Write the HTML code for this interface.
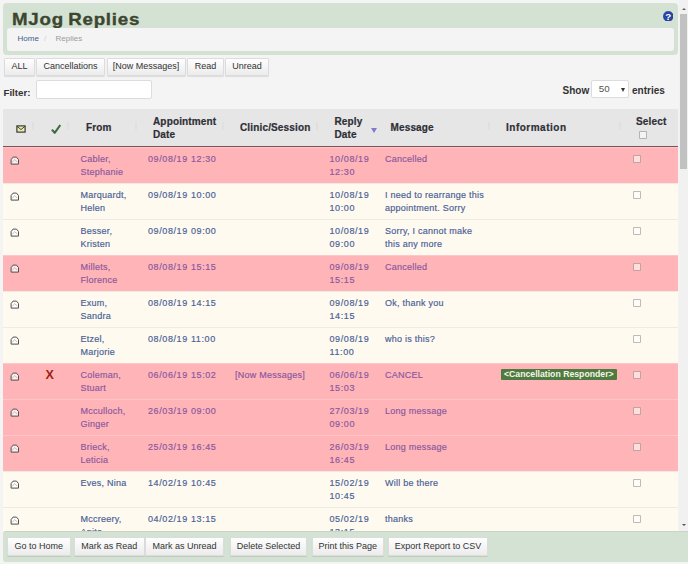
<!DOCTYPE html>
<html><head><meta charset="utf-8"><style>
*{box-sizing:border-box}
html,body{margin:0;padding:0}
body{width:688px;height:564px;overflow:hidden;background:#f4f4f4;position:relative;font-family:"Liberation Sans",sans-serif;}
.abs{position:absolute}
#hdr{position:absolute;left:3px;top:3px;width:675px;height:52px;background:#d4e2d4;border-radius:4px;}
#title{position:absolute;left:12px;top:7.5px;font-size:17px;font-weight:bold;color:#3c4630;letter-spacing:0.7px;word-spacing:-1.5px;-webkit-text-stroke:0.35px currentColor;transform:scaleX(1.1);transform-origin:0 0;white-space:nowrap;line-height:24px}
#help{position:absolute;left:662px;top:10px;width:11.5px;height:11.5px;border-radius:50%;background:#2f4fae;color:#fff;font-size:9px;font-weight:bold;text-align:center;line-height:11.5px}
#bc{position:absolute;left:7px;top:28px;width:667px;height:22.5px;background:#f3f4f3;border-radius:3px;}
#bc span{position:absolute;top:0;font-size:8px;line-height:10px;white-space:nowrap}
.btn{position:absolute;height:17.5px;border:1px solid #dcdcdc;border-radius:1px;background:linear-gradient(#fefefe,#ececec);box-shadow:0 1px 1px rgba(0,0,0,.10);font-size:9px;color:#333;text-align:center;line-height:15.5px;white-space:nowrap}
.lbl{position:absolute;font-size:10px;font-weight:bold;color:#333;white-space:nowrap;line-height:12px}
#filter{position:absolute;left:36px;top:79.7px;width:116px;height:19.2px;background:#fff;border:1px solid #dcdcdc;border-radius:2px}
#sel{position:absolute;left:591.3px;top:80.2px;width:38px;height:18px;background:#fff;border:1px solid #dcdcdc;border-radius:2px;font-size:9.8px;color:#555;line-height:16.5px;padding-left:6.5px}
#sel i{position:absolute;right:3px;top:7px;width:0;height:0;border-left:2.5px solid transparent;border-right:2.5px solid transparent;border-top:4px solid #333}
#thead{position:absolute;left:3px;top:108.5px;width:675px;height:37px;background:#e6e6e6}
#thb{position:absolute;left:3px;top:145.5px;width:675px;height:1.6px;background:#7a5257}
.th{position:absolute;font-size:10px;font-weight:bold;color:#2f2f36;letter-spacing:0.15px;line-height:12.5px;-webkit-text-stroke:0.2px currentColor;white-space:nowrap}
.sort{position:absolute;width:2px;height:8px;background:#e0e0e0;top:14px}
.row{position:absolute;left:3px;width:675px;height:36px;}
.rp{background:#ffb5b7;color:#8c58a0;border-top:1px solid #ffc5c8}
.rc{background:#fffaf0;color:#4a6296;border-top:1px solid #efeae2}
.row .t{position:absolute;top:4.5px;font-size:9px;line-height:13px;-webkit-text-stroke:0.18px currentColor;letter-spacing:0.25px;white-space:nowrap}
.row .dt{letter-spacing:0.6px}
.ic{position:absolute}
.eo{display:block}
.xx{position:absolute;left:42.5px;top:3.5px;font-size:12.5px;font-weight:bold;color:#a01e14;line-height:14px}
.badge{position:absolute;left:498px;top:4.5px;height:11px;padding:0 3px;background:#4e7b3f;color:#f6f6ea;font-size:8.7px;font-weight:bold;line-height:11px;border-radius:1px;white-space:nowrap}
.cb{position:absolute;width:7.5px;height:7.5px;border:1px solid rgba(60,40,40,0.32);border-radius:1px;background:rgba(255,255,255,0.55)}
#sb{position:absolute;left:679px;top:0;width:9px;height:531px;background:#f1f1f1}
#thumb{position:absolute;left:680px;top:14px;width:7px;height:155px;background:#c1c1c1}
.arr{position:absolute;width:0;height:0;border-left:3px solid transparent;border-right:3px solid transparent}
#foot{position:absolute;left:3px;top:531px;width:685px;height:31px;background:#d4e2d4;border-top:1px solid #c9d3c6;border-radius:3px 0 0 3px}
</style></head><body>
<div id="hdr"></div>
<div id="title" class="abs">MJog Replies</div>
<svg class="abs" style="left:662.7px;top:10.9px" width="10.6" height="10.6" viewBox="0 0 10.6 10.6"><circle cx="5.3" cy="5.3" r="5.1" fill="#2a44a6" stroke="#22378a" stroke-width="0.4"/><text x="5.3" y="8.9" text-anchor="middle" font-family="Liberation Sans" font-weight="bold" font-size="9.8" fill="#fff">?</text></svg>
<div id="bc"><span style="left:10.5px;top:6px;color:#3f5c90">Home</span><span style="left:37px;top:6px;color:#cfcfcf">/</span><span style="left:48.5px;top:6px;color:#9b9b9b">Replies</span></div>

<div class="btn" style="left:4px;top:58.2px;width:31px">ALL</div>
<div class="btn" style="left:36px;top:58.2px;width:69px">Cancellations</div>
<div class="btn" style="left:106.5px;top:58.2px;width:79px">[Now Messages]</div>
<div class="btn" style="left:187px;top:58.2px;width:37px">Read</div>
<div class="btn" style="left:225px;top:58.2px;width:44px">Unread</div>

<div class="lbl" style="left:3.5px;top:87px;font-size:9.7px">Filter:</div>
<div id="filter"></div>
<div class="lbl" style="left:562.5px;top:85px">Show</div>
<div id="sel">50<i></i></div>
<div class="lbl" style="left:632px;top:85px">entries</div>

<div id="thead"></div>
<div id="thb"></div>
<svg class="abs" style="left:15.5px;top:124.5px" width="10" height="8" viewBox="0 0 10 8"><rect x="0.9" y="0.9" width="8.2" height="6.2" fill="#ecebb0" stroke="#2a2a2a" stroke-width="1.1"/><path d="M1 1.2L5 4.6L9 1.2" fill="none" stroke="#3a4a2a" stroke-width="1"/></svg>
<svg class="abs" style="left:50.5px;top:123.5px" width="10" height="10" viewBox="0 0 10 10"><path d="M0.9 5.6L3.7 8.8L9.3 1" fill="none" stroke="#3f6a3c" stroke-width="2.1" stroke-linejoin="round"/></svg>
<div class="th" style="left:86px;top:122px">From</div>
<div class="th" style="left:153px;top:116px">Appointment<br>Date</div>
<div class="th" style="left:240px;top:122px">Clinic/Session</div>
<div class="th" style="left:334.5px;top:116px">Reply<br>Date</div>
<svg class="abs" style="left:370.5px;top:128px" width="6" height="5" viewBox="0 0 6 5"><path d="M0 0H6L3 5Z" fill="#7b7bd0"/></svg>
<div class="th" style="left:390.5px;top:122px">Message</div>
<div class="th" style="left:506px;top:122px;letter-spacing:0.5px">Information</div>
<div class="th" style="left:636px;top:116px">Select</div>
<div class="cb" style="left:639px;top:131px"></div>
<div class="sort" style="left:32px;top:122px"></div>
<div class="sort" style="left:67px;top:122px"></div>
<div class="sort" style="left:135px;top:122px"></div>
<div class="sort" style="left:222px;top:122px"></div>
<div class="sort" style="left:316px;top:122px"></div>
<div class="sort" style="left:488px;top:122px"></div>
<div class="sort" style="left:619px;top:122px"></div>

<div class="row rp" style="top:147px"><div class="ic" style="left:7px;top:8px"><svg class="eo" width="10" height="9" viewBox="0 0 10 9"><path d="M1.1 8.1V3.6L3.1 1.1H6.5L8.5 3.6V8.1Z" fill="rgba(255,255,255,0.75)" stroke="#505050" stroke-width="1" stroke-linejoin="round"/><path d="M2.2 6.2L4.8 3.6L7.4 6.2" fill="none" stroke="#b8b8b8" stroke-width="0.9"/></svg></div><div class="t nm" style="left:77.5px">Cabler,<br>Stephanie</div><div class="t dt" style="left:145px">09/08/19 12:30</div><div class="t dt" style="left:326.5px">10/08/19<br>12:30</div><div class="t" style="left:382px">Cancelled</div><div class="cb" style="left:630.3px;top:7.3px"></div></div><div class="row rc" style="top:183px"><div class="ic" style="left:7px;top:8px"><svg class="eo" width="10" height="9" viewBox="0 0 10 9"><path d="M1.1 8.1V3.6L3.1 1.1H6.5L8.5 3.6V8.1Z" fill="rgba(255,255,255,0.75)" stroke="#505050" stroke-width="1" stroke-linejoin="round"/><path d="M2.2 6.2L4.8 3.6L7.4 6.2" fill="none" stroke="#b8b8b8" stroke-width="0.9"/></svg></div><div class="t nm" style="left:77.5px">Marquardt,<br>Helen</div><div class="t dt" style="left:145px">09/08/19 10:00</div><div class="t dt" style="left:326.5px">10/08/19<br>10:00</div><div class="t" style="left:382px">I need to rearrange this<br>appointment. Sorry</div><div class="cb" style="left:630.3px;top:7.3px"></div></div><div class="row rc" style="top:219px"><div class="ic" style="left:7px;top:8px"><svg class="eo" width="10" height="9" viewBox="0 0 10 9"><path d="M1.1 8.1V3.6L3.1 1.1H6.5L8.5 3.6V8.1Z" fill="rgba(255,255,255,0.75)" stroke="#505050" stroke-width="1" stroke-linejoin="round"/><path d="M2.2 6.2L4.8 3.6L7.4 6.2" fill="none" stroke="#b8b8b8" stroke-width="0.9"/></svg></div><div class="t nm" style="left:77.5px">Besser,<br>Kristen</div><div class="t dt" style="left:145px">09/08/19 09:00</div><div class="t dt" style="left:326.5px">10/08/19<br>09:00</div><div class="t" style="left:382px">Sorry, I cannot make<br>this any more</div><div class="cb" style="left:630.3px;top:7.3px"></div></div><div class="row rp" style="top:255px"><div class="ic" style="left:7px;top:8px"><svg class="eo" width="10" height="9" viewBox="0 0 10 9"><path d="M1.1 8.1V3.6L3.1 1.1H6.5L8.5 3.6V8.1Z" fill="rgba(255,255,255,0.75)" stroke="#505050" stroke-width="1" stroke-linejoin="round"/><path d="M2.2 6.2L4.8 3.6L7.4 6.2" fill="none" stroke="#b8b8b8" stroke-width="0.9"/></svg></div><div class="t nm" style="left:77.5px">Millets,<br>Florence</div><div class="t dt" style="left:145px">08/08/19 15:15</div><div class="t dt" style="left:326.5px">09/08/19<br>15:15</div><div class="t" style="left:382px">Cancelled</div><div class="cb" style="left:630.3px;top:7.3px"></div></div><div class="row rc" style="top:291px"><div class="ic" style="left:7px;top:8px"><svg class="eo" width="10" height="9" viewBox="0 0 10 9"><path d="M1.1 8.1V3.6L3.1 1.1H6.5L8.5 3.6V8.1Z" fill="rgba(255,255,255,0.75)" stroke="#505050" stroke-width="1" stroke-linejoin="round"/><path d="M2.2 6.2L4.8 3.6L7.4 6.2" fill="none" stroke="#b8b8b8" stroke-width="0.9"/></svg></div><div class="t nm" style="left:77.5px">Exum,<br>Sandra</div><div class="t dt" style="left:145px">08/08/19 14:15</div><div class="t dt" style="left:326.5px">09/08/19<br>14:15</div><div class="t" style="left:382px">Ok, thank you</div><div class="cb" style="left:630.3px;top:7.3px"></div></div><div class="row rc" style="top:327px"><div class="ic" style="left:7px;top:8px"><svg class="eo" width="10" height="9" viewBox="0 0 10 9"><path d="M1.1 8.1V3.6L3.1 1.1H6.5L8.5 3.6V8.1Z" fill="rgba(255,255,255,0.75)" stroke="#505050" stroke-width="1" stroke-linejoin="round"/><path d="M2.2 6.2L4.8 3.6L7.4 6.2" fill="none" stroke="#b8b8b8" stroke-width="0.9"/></svg></div><div class="t nm" style="left:77.5px">Etzel,<br>Marjorie</div><div class="t dt" style="left:145px">08/08/19 11:00</div><div class="t dt" style="left:326.5px">09/08/19<br>11:00</div><div class="t" style="left:382px">who is this?</div><div class="cb" style="left:630.3px;top:7.3px"></div></div><div class="row rp" style="top:363px"><div class="ic" style="left:7px;top:8px"><svg class="eo" width="10" height="9" viewBox="0 0 10 9"><path d="M1.1 8.1V3.6L3.1 1.1H6.5L8.5 3.6V8.1Z" fill="rgba(255,255,255,0.75)" stroke="#505050" stroke-width="1" stroke-linejoin="round"/><path d="M2.2 6.2L4.8 3.6L7.4 6.2" fill="none" stroke="#b8b8b8" stroke-width="0.9"/></svg></div><div class="xx">X</div><div class="t nm" style="left:77.5px">Coleman,<br>Stuart</div><div class="t dt" style="left:145px">06/06/19 15:02</div><div class="t" style="left:232px">[Now Messages]</div><div class="t dt" style="left:326.5px">06/06/19<br>15:03</div><div class="t" style="left:382px">CANCEL</div><div class="badge">&lt;Cancellation Responder&gt;</div><div class="cb" style="left:630.3px;top:7.3px"></div></div><div class="row rp" style="top:399px"><div class="ic" style="left:7px;top:8px"><svg class="eo" width="10" height="9" viewBox="0 0 10 9"><path d="M1.1 8.1V3.6L3.1 1.1H6.5L8.5 3.6V8.1Z" fill="rgba(255,255,255,0.75)" stroke="#505050" stroke-width="1" stroke-linejoin="round"/><path d="M2.2 6.2L4.8 3.6L7.4 6.2" fill="none" stroke="#b8b8b8" stroke-width="0.9"/></svg></div><div class="t nm" style="left:77.5px">Mcculloch,<br>Ginger</div><div class="t dt" style="left:145px">26/03/19 09:00</div><div class="t dt" style="left:326.5px">27/03/19<br>09:00</div><div class="t" style="left:382px">Long message</div><div class="cb" style="left:630.3px;top:7.3px"></div></div><div class="row rp" style="top:435px"><div class="ic" style="left:7px;top:8px"><svg class="eo" width="10" height="9" viewBox="0 0 10 9"><path d="M1.1 8.1V3.6L3.1 1.1H6.5L8.5 3.6V8.1Z" fill="rgba(255,255,255,0.75)" stroke="#505050" stroke-width="1" stroke-linejoin="round"/><path d="M2.2 6.2L4.8 3.6L7.4 6.2" fill="none" stroke="#b8b8b8" stroke-width="0.9"/></svg></div><div class="t nm" style="left:77.5px">Brieck,<br>Leticia</div><div class="t dt" style="left:145px">25/03/19 16:45</div><div class="t dt" style="left:326.5px">26/03/19<br>16:45</div><div class="t" style="left:382px">Long message</div><div class="cb" style="left:630.3px;top:7.3px"></div></div><div class="row rc" style="top:471px"><div class="ic" style="left:7px;top:8px"><svg class="eo" width="10" height="9" viewBox="0 0 10 9"><path d="M1.1 8.1V3.6L3.1 1.1H6.5L8.5 3.6V8.1Z" fill="rgba(255,255,255,0.75)" stroke="#505050" stroke-width="1" stroke-linejoin="round"/><path d="M2.2 6.2L4.8 3.6L7.4 6.2" fill="none" stroke="#b8b8b8" stroke-width="0.9"/></svg></div><div class="t nm" style="left:77.5px">Eves, Nina</div><div class="t dt" style="left:145px">14/02/19 10:45</div><div class="t dt" style="left:326.5px">15/02/19<br>10:45</div><div class="t" style="left:382px">Will be there</div><div class="cb" style="left:630.3px;top:7.3px"></div></div><div class="row rc" style="top:507px"><div class="ic" style="left:7px;top:8px"><svg class="eo" width="10" height="9" viewBox="0 0 10 9"><path d="M1.1 8.1V3.6L3.1 1.1H6.5L8.5 3.6V8.1Z" fill="rgba(255,255,255,0.75)" stroke="#505050" stroke-width="1" stroke-linejoin="round"/><path d="M2.2 6.2L4.8 3.6L7.4 6.2" fill="none" stroke="#b8b8b8" stroke-width="0.9"/></svg></div><div class="t nm" style="left:77.5px">Mccreery,<br>Anita</div><div class="t dt" style="left:145px">04/02/19 13:15</div><div class="t dt" style="left:326.5px">05/02/19<br>13:15</div><div class="t" style="left:382px">thanks</div><div class="cb" style="left:630.3px;top:7.3px"></div></div>

<div id="sb"></div>
<div id="thumb"></div>
<div class="arr" style="left:681.5px;top:8px;border-left-width:2.5px;border-right-width:2.5px;border-bottom:2.5px solid #606060"></div>
<div class="arr" style="left:681.5px;top:523.5px;border-left-width:2.5px;border-right-width:2.5px;border-top:2.5px solid #505050"></div>

<div id="foot"></div>
<div class="btn" style="left:7px;top:537px;width:63.5px;height:18.5px;line-height:16.5px">Go to Home</div>
<div class="btn" style="left:73.5px;top:537px;width:71.5px;height:18.5px;line-height:16.5px">Mark as Read</div>
<div class="btn" style="left:145px;top:537px;width:79px;height:18.5px;line-height:16.5px">Mark as Unread</div>
<div class="btn" style="left:230px;top:537px;width:77px;height:18.5px;line-height:16.5px">Delete Selected</div>
<div class="btn" style="left:311.5px;top:537px;width:72.5px;height:18.5px;line-height:16.5px">Print this Page</div>
<div class="btn" style="left:388px;top:537px;width:100px;height:18.5px;line-height:16.5px">Export Report to CSV</div>
</body></html>
